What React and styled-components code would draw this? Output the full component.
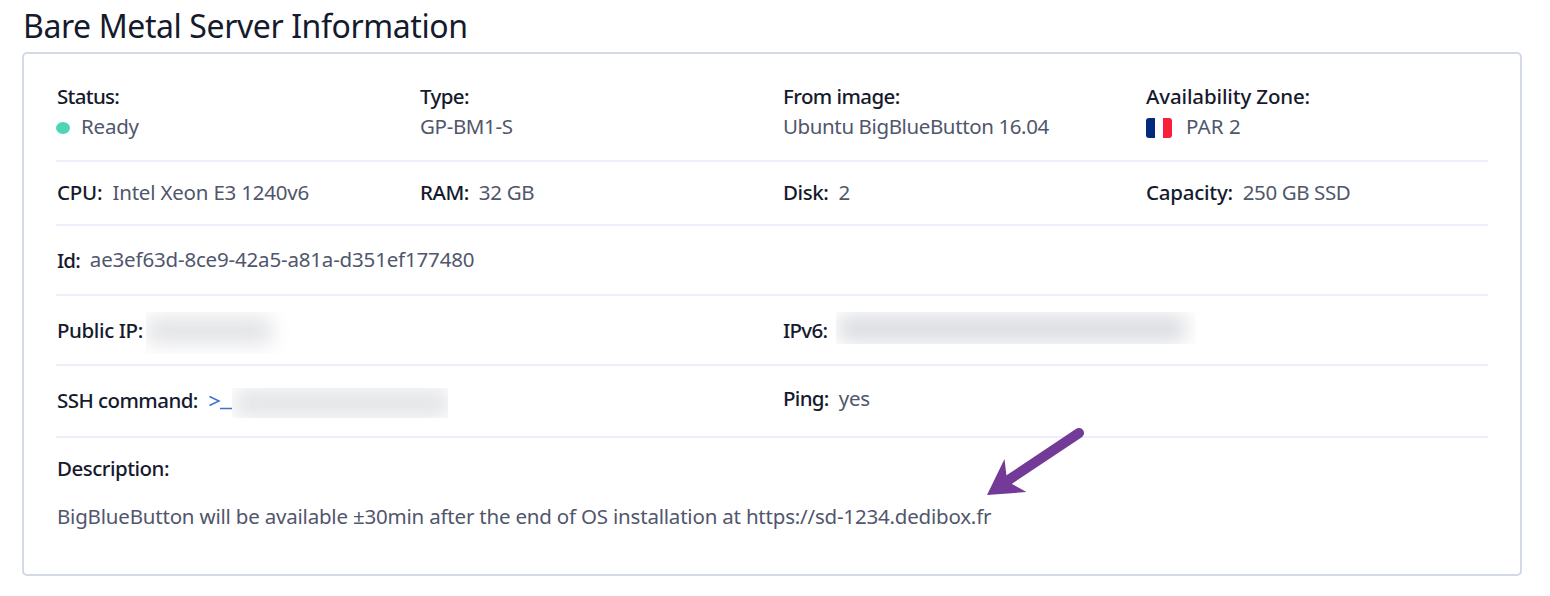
import React from "react";
import styled, { createGlobalStyle } from "styled-components";

const GlobalStyle = createGlobalStyle`
  body {
    margin: 0;
    background: #fff;
    font-family: "Noto Sans", "Open Sans", sans-serif;
  }
`;

const Page = styled.main`
  position: relative;
  box-sizing: border-box;
  height: 596px;
  padding: 0 28px 20px 22px;
  overflow: hidden;
`;

const Title = styled.h1`
  margin: 0;
  height: 52px;
  box-sizing: border-box;
  padding-top: 1px;
  font-size: 32px;
  font-weight: 400;
  line-height: 50px;
  letter-spacing: -0.41px;
  text-indent: 1px;
  color: #151a2d;
  white-space: nowrap;
`;

const Card = styled.section`
  box-sizing: border-box;
  height: 524px;
  padding: 0 32px;
  border: 2px solid #d4d9e8;
  border-radius: 5px;
`;

const Row = styled.div`
  display: grid;
  grid-template-columns: ${(p) => p.$columns};
  box-sizing: border-box;
  height: ${(p) => p.$height}px;
  padding: ${(p) => p.$top}px 0 0 1px;
  border-bottom: ${(p) => (p.$last ? "none" : "2px solid #edeffd")};
  align-content: start;
`;

const Field = styled.div`
  display: flex;
  flex-direction: ${(p) => (p.$stacked ? "column" : "row")};
  align-items: flex-start;
  gap: ${(p) => p.$gap ?? 0}px;
  margin-top: ${(p) => p.$shift ?? 0}px;
  min-width: 0;
`;

const Label = styled.span`
  flex: none;
  width: ${(p) => (p.$width ? `${p.$width}px` : "auto")};
  font-size: 20.5px;
  font-weight: 500;
  line-height: 30px;
  letter-spacing: ${(p) => p.$track ?? 0}px;
  color: #151a2d;
  white-space: nowrap;
`;

const Value = styled.span`
  display: flex;
  align-items: center;
  flex: none;
  margin-top: ${(p) => p.$shift ?? 0}px;
  font-size: 20.5px;
  line-height: 30px;
  letter-spacing: ${(p) => p.$track ?? 0}px;
  color: #50566c;
  white-space: pre;
`;

const StatusDot = styled.i`
  width: 14px;
  height: 12px;
  margin: 3px 11px 0 -1px;
  border-radius: 50%;
  background: #4fd5b4;
`;

const Flag = styled.svg`
  width: 26px;
  height: 20px;
  margin: 3px 14px 0 0;
`;

const Prompt = styled.svg`
  flex: none;
  width: 23px;
  height: 30px;
`;

const Redacted = styled.span`
  position: relative;
  flex: none;
  overflow: hidden;
  width: ${(p) => p.$width}px;
  height: ${(p) => p.$height}px;
  margin: ${(p) => p.$offset}px 0 -20px;

  &::before {
    content: "";
    position: absolute;
    inset: ${(p) => p.$inset};
    border-radius: 6px;
    background: ${(p) => p.$ink};
    filter: blur(10px);
  }
`;

const Arrow = styled.svg`
  position: absolute;
  left: 980px;
  top: 420px;
  width: 112px;
  height: 80px;
`;

const FOUR = "363px 363px 363px 1fr";
const TWO = "726px 1fr";

export default function App() {
  return (
    <>
      <GlobalStyle />
      <Page>
        <Title>Bare Metal Server Information</Title>
        <Card>
          <Row $columns={FOUR} $height={108} $top={27}>
            <Field $stacked>
              <Label $track={-0.7}>Status:</Label>
              <Value $track={-0.2}><StatusDot />Ready</Value>
            </Field>
            <Field $stacked>
              <Label $track={-0.6}>Type:</Label>
              <Value $track={-0.35}>GP-BM1-S</Value>
            </Field>
            <Field $stacked>
              <Label $track={-0.58}>From image:</Label>
              <Value $track={-0.39}>Ubuntu BigBlueButton 16.04</Value>
            </Field>
            <Field $stacked>
              <Label $track={-0.14}>Availability Zone:</Label>
              <Value $track={0.1}>
                <Flag viewBox="0 0 26 20">
                  <path d="M3 0H9V20H3Q0 20 0 17V3Q0 0 3 0Z" fill="#052a7d" />
                  <path d="M17 0H23Q26 0 26 3V17Q26 20 23 20H17Z" fill="#f6203b" />
                </Flag>
                PAR 2
              </Value>
            </Field>
          </Row>

          <Row $columns={FOUR} $height={64} $top={15}>
            <Field $gap={10}>
              <Label $track={-0.2}>CPU:</Label>
              <Value $track={-0.2}>Intel Xeon E3 1240v6</Value>
            </Field>
            <Field $gap={10}>
              <Label $track={-0.5}>RAM:</Label>
              <Value $track={-0.3}>32 GB</Value>
            </Field>
            <Field $gap={10}>
              <Label $track={-0.4}>Disk:</Label>
              <Value>2</Value>
            </Field>
            <Field $gap={10}>
              <Label $track={-0.25}>Capacity:</Label>
              <Value $track={-0.4}>250 GB SSD</Value>
            </Field>
          </Row>

          <Row $columns="1fr" $height={70} $top={19}>
            <Field $gap={10}>
              <Label $track={-0.9}>Id:</Label>
              <Value $shift={-1} $track={-0.17}>ae3ef63d-8ce9-42a5-a81a-d351ef177480</Value>
            </Field>
          </Row>

          <Row $columns={TWO} $height={70} $top={19}>
            <Field>
              <Label $track={-0.4} $width={89}>Public IP:</Label>
              <Redacted $width={150} $height={42} $offset={-3} $inset="5px 24px 10px 0" $ink="#e2e3e6" />
            </Field>
            <Field>
              <Label $track={-0.7} $width={53}>IPv6:</Label>
              <Redacted $width={360} $height={32} $offset={-3} $inset="3px 10px 2px 2px" $ink="#dadce0" />
            </Field>
          </Row>

          <Row $columns={TWO} $height={72} $top={19}>
            <Field>
              <Label $track={-0.55} $width={152}>SSH command:</Label>
              <Prompt viewBox="0 0 23 30" fill="none" stroke="#3f70d8" strokeWidth="1.5">
                <path d="M0.5 11.5L10 16L0.5 20.5M11 23.4H23" />
              </Prompt>
              <Redacted $width={216} $height={30} $offset={3} $inset="0 -2px 0 2px" $ink="#e4e5e8" />
            </Field>
            <Field $gap={10} $shift={-2}>
              <Label $track={-0.7}>Ping:</Label>
              <Value $track={-0.2}>yes</Value>
            </Field>
          </Row>

          <Row $columns="1fr" $height={136} $top={15} $last>
            <Field $stacked $gap={18}>
              <Label $track={-0.5}>Description:</Label>
              <Value $track={-0.2}>
                BigBlueButton will be available ±30min after the end of OS installation at https://sd-1234.dedibox.fr
              </Value>
            </Field>
          </Row>
        </Card>
        <Arrow viewBox="980 420 112 80" fill="#743a97">
          <path d="M1079 433L1007 481" stroke="#743a97" strokeWidth="10" strokeLinecap="round" />
          <path d="M987 495L1004.5 459L1006.5 476L1012 484L1026.5 492Z" />
        </Arrow>
      </Page>
    </>
  );
}
